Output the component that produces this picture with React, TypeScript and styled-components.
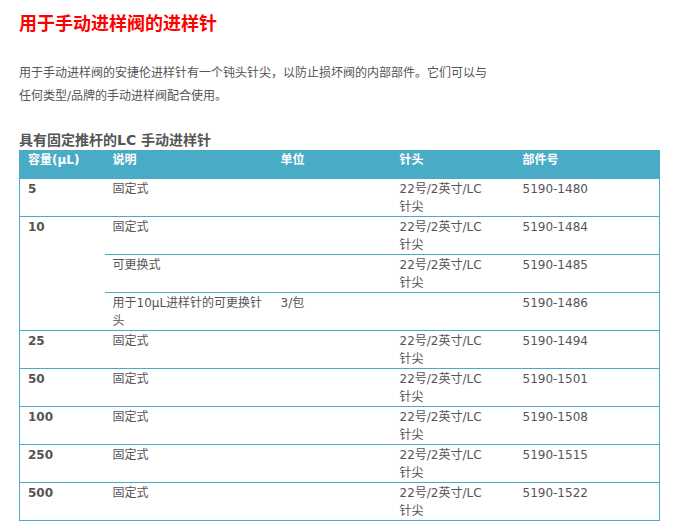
import React from "react";
import styled, { createGlobalStyle } from "styled-components";

const G = createGlobalStyle`
  body { margin: 0; background: #fff; font-family: "DejaVu Sans", "Noto Sans CJK SC", sans-serif; color: #555; }
`;
const Page = styled.div`padding: 12px 18px 0 19px; width: 641px;`;
const Title = styled.h1`margin: 0; font-size: 18px; line-height: 24px; color: #f00; font-weight: bold;`;
const Para = styled.p`margin: 26px 0 0; font-size: 12px; line-height: 23px; color: #555;`;
const H2 = styled.h2`margin: 22px 0 0; font-size: 14px; line-height: 20px; font-weight: bold; color: #555;`;
const Table = styled.table`
  border-collapse: collapse; width: 641px; table-layout: fixed; font-size: 12px; line-height: 18px;
  border-left: 1px solid #4aabc6; border-right: 1px solid #4aabc6;
`;
const Th = styled.th`
  background: #4aabc6; color: #fff; text-align: left; font-weight: bold; padding: 1px 8px 10px; height: 18px; vertical-align: top;
`;
const Td = styled.td<{ $b?: boolean; $narrow?: boolean }>`
  padding: 1px ${(p) => (p.$narrow ? "22px" : "8px")} 0 8px; height: 37px; vertical-align: top; border-bottom: 1px solid #4aabc6;
  font-weight: ${(p) => (p.$b ? "bold" : "normal")}; color: #555; box-sizing: border-box;
`;

const tip = "22号/2英寸/LC针尖";
const rows: [string, string, string, string, string][] = [
  ["5", "固定式", "", tip, "5190-1480"],
  ["25", "固定式", "", tip, "5190-1494"],
  ["50", "固定式", "", tip, "5190-1501"],
  ["100", "固定式", "", tip, "5190-1508"],
  ["250", "固定式", "", tip, "5190-1515"],
  ["500", "固定式", "", tip, "5190-1522"],
];

export default function App() {
  const row = (r: typeof rows[0]) => (
    <tr key={r[4]}>
      <Td $b>{r[0]}</Td><Td>{r[1]}</Td><Td>{r[2]}</Td><Td $narrow>{r[3]}</Td><Td>{r[4]}</Td>
    </tr>
  );
  return (
    <Page>
      <G />
      <Title>用于手动进样阀的进样针</Title>
      <Para>用于手动进样阀的安捷伦进样针有一个钝头针尖，以防止损坏阀的内部部件。它们可以与<br />任何类型/品牌的手动进样阀配合使用。</Para>
      <H2>具有固定推杆的LC 手动进样针</H2>
      <Table>
        <colgroup>
          <col style={{ width: 85 }} /><col style={{ width: 168 }} /><col style={{ width: 119 }} /><col style={{ width: 123 }} /><col />
        </colgroup>
        <thead>
          <tr><Th>容量(μL)</Th><Th>说明</Th><Th>单位</Th><Th>针头</Th><Th>部件号</Th></tr>
        </thead>
        <tbody>
          {row(rows[0])}
          <tr><Td $b rowSpan={3}>10</Td><Td>固定式</Td><Td></Td><Td $narrow>{tip}</Td><Td>5190-1484</Td></tr>
          <tr><Td>可更换式</Td><Td></Td><Td $narrow>{tip}</Td><Td>5190-1485</Td></tr>
          <tr><Td>用于10μL进样针的可更换针头</Td><Td>3/包</Td><Td></Td><Td>5190-1486</Td></tr>
          {rows.slice(1).map(row)}
        </tbody>
      </Table>
    </Page>
  );
}
